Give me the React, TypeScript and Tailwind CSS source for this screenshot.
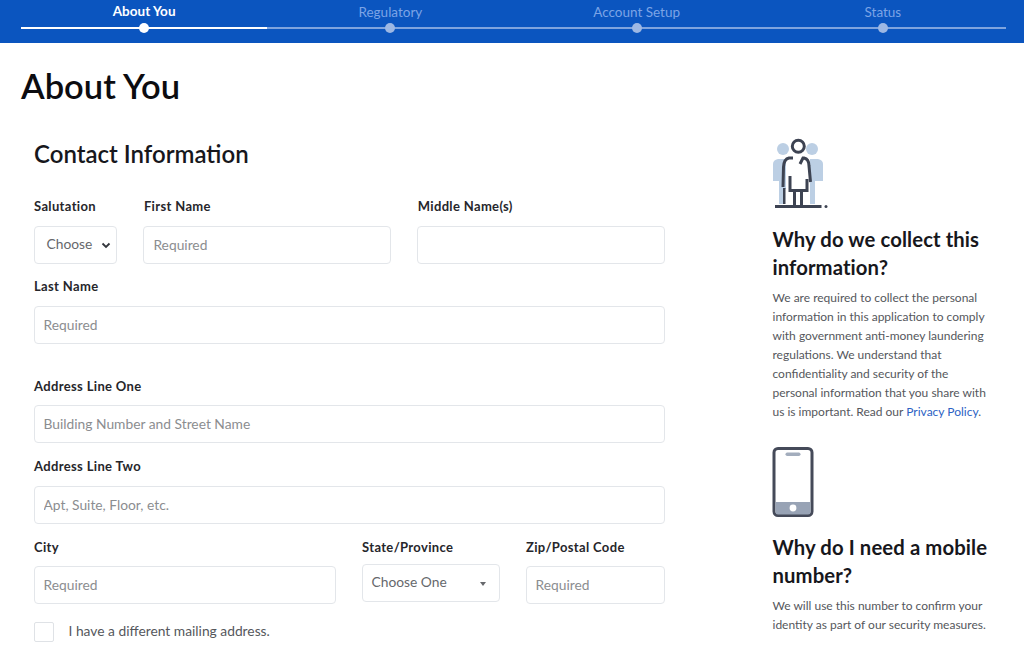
import React from "react";

function Label({ children }: { children: React.ReactNode }) {
  return <div className="ml-[0.5px] h-[20px] text-[13px] leading-[20px] font-bold text-[#26262b] tracking-[0.35px] whitespace-nowrap">{children}</div>;
}

function Field({ label, placeholder, className, tight }: { label: string; placeholder?: string; className?: string; tight?: boolean }) {
  return (
    <div className={className}>
      <Label>{label}</Label>
      <input
        readOnly
        placeholder={placeholder}
        className={`${tight ? "mt-[9px]" : "mt-[10px]"} block w-full h-[38px] rounded-[4px] border border-[#e3e6ea] bg-white px-[9px] pb-[2px] text-[13.8px] placeholder:text-[#8b8d90] outline-none`}
      />
    </div>
  );
}

function Step({ label, active }: { label: string; active?: boolean }) {
  return (
    <div className="relative flex-1 h-full flex flex-col items-center">
      <div className={`h-[17px] text-[13.5px] leading-[17px] ${active ? "mt-[3px] font-bold text-white" : "mt-[4px] text-[#7ca4e6]"}`}>{label}</div>
      <div className={`absolute left-0 right-0 top-[27px] h-[2px] ${active ? "bg-white" : "bg-[#7fa4de]"}`} />
      <div className={`absolute top-[23px] w-[10px] h-[10px] rounded-full ${active ? "bg-white" : "bg-[#9db8e4]"}`} />
    </div>
  );
}

function PeopleIcon() {
  return (
    <svg width="58" height="72" viewBox="22 8 58 72" className="block">
      <g fill="#bccfe4">
        <circle cx="33" cy="20" r="6" />
        <circle cx="62" cy="20" r="6" />
        <path d="M23 35q0-4 5-5h8v30h-2v15h-5V52h-6z" />
        <path d="M73 35q0-4-5-5h-8v25h0v20h5V52h8z" />
      </g>
      <g fill="none" stroke="#3d4352" strokeWidth="3">
        <circle cx="48.3" cy="17.3" r="6" />
        <path d="M43 29h-4q-5 1-5.500 9L33 58" />
        <path d="M50 35l3-6h1q5 1 5 8l1.500 16" />
        <path d="M40 47v14.500h17V50" />
        <path d="M44.500 61.500V76M51.500 61.500V76" />
      </g>
      <path d="M33 59h2.500v16H33z" fill="#3d4352" />
      <path d="M25 77.500h46.500" stroke="#3d4352" strokeWidth="3" />
      <circle cx="76" cy="77.500" r="1.500" fill="#3d4352" />
    </svg>
  );
}

function PhoneIcon() {
  return (
    <svg width="42" height="70" viewBox="0 0 42 70" className="block">
      <rect x="2" y="1.500" width="38" height="67" rx="4" fill="#fff" stroke="#454a59" strokeWidth="3" />
      <path d="M3.500 55h35v10a2.500 2.500 0 0 1-2.500 2.500H6a2.500 2.500 0 0 1-2.500-2.500z" fill="#98a3b5" />
      <rect x="13.500" y="5.500" width="15" height="3.500" rx="1.700" fill="#a3adbd" />
      <circle cx="21" cy="61" r="3.400" fill="#fff" />
    </svg>
  );
}

function H2({ children }: { children: React.ReactNode }) {
  return <h2 className="text-[20.3px] leading-[28px] font-bold text-[#17171c] tracking-[0.1px] whitespace-nowrap">{children}</h2>;
}

export default function App() {
  return (
    <div className="w-[1024px] h-[650px] overflow-hidden bg-white font-['Lato','Liberation_Sans',sans-serif]">
      <header className="h-[43px] bg-[#0b55bf] pl-[21px] pr-[18px] flex">
        <Step label="About You" active />
        <Step label="Regulatory" />
        <Step label="Account Setup" />
        <Step label="Status" />
      </header>

      <main className="px-[21px]">
        <h1 className="mt-[23px] h-[40px] text-[34.5px] leading-[40px] font-semibold text-[#0c0c10]">About You</h1>

        <div className="flex mt-[32px] pl-[12.5px]">
          <section className="w-[631.5px]">
            <h2 className="ml-[0.5px] mt-[1px] h-[30px] text-[24px] leading-[30px] font-semibold text-[#17171c]">Contact Information</h2>

            <div className="flex gap-[26px] mt-[27px]">
              <div className="w-[84px]">
                <Label>Salutation</Label>
                <div className="mt-[10px] h-[38px] rounded-[4px] border border-[#e3e6ea] pl-[12px] pr-[5px] pb-[2px] flex items-center justify-between text-[13.8px] text-[#66686c]">
                  Choose
                  <svg width="10" height="7" viewBox="0 0 10 7" className="mt-[2px]"><path d="M1.500 1.500L5 5l3.500-3.500" fill="none" stroke="#33363c" strokeWidth="1.800" /></svg>
                </div>
              </div>
              <Field label="First Name" placeholder="Required" className="w-[248px]" />
              <Field label="Middle Name(s)" className="w-[248px]" />
            </div>

            <Field label="Last Name" placeholder="Required" className="mt-[12px]" />
            <Field label="Address Line One" placeholder="Building Number and Street Name" className="mt-[32px]" tight />
            <Field label="Address Line Two" placeholder="Apt, Suite, Floor, etc." className="mt-[13px]" />

            <div className="flex gap-[26px] mt-[13px]">
              <Field label="City" placeholder="Required" className="w-[302px]" tight />
              <div className="w-[138px]">
                <Label>State/Province</Label>
                <div className="mt-[7px] h-[38px] rounded-[4px] border border-[#e3e6ea] pl-[9px] pr-[13px] pb-[1px] flex items-center justify-between text-[13.8px] text-[#66686c]">
                  Choose One
                  <svg width="6" height="4" viewBox="0 0 6 4" className="mt-[2px]"><path d="M0 0h6L3 4z" fill="#66686c" /></svg>
                </div>
              </div>
              <Field label="Zip/Postal Code" placeholder="Required" className="w-[139px]" tight />
            </div>

            <div className="flex items-center mt-[17px]">
              <div className="w-[20px] h-[20px] border border-[#dfe2e6] rounded-[2px]" />
              <span className="ml-[15px] pb-[2px] text-[13.8px] text-[#55575c]">I have a different mailing address.</span>
            </div>
          </section>

          <aside className="ml-[107px] w-[225px] -mt-[1px]">
            <PeopleIcon />
            <div className="mt-[16px] ml-[0.5px]">
              <H2>Why do we collect this<br />information?</H2>
            </div>
            <p className="mt-[7px] ml-[0.5px] text-[12px] leading-[19px] text-[#55575c] whitespace-nowrap">
              We are required to collect the personal<br />
              information in this application to comply<br />
              with government anti-money laundering<br />
              regulations. We understand that<br />
              confidentiality and security of the<br />
              personal information that you share with<br />
              us is important. Read our <span className="text-[#2c62c4]">Privacy Policy</span>.
            </p>
            <div className="mt-[26px]"><PhoneIcon /></div>
            <div className="mt-[16px] ml-[0.5px]">
              <H2>Why do I need a mobile<br />number?</H2>
            </div>
            <p className="mt-[7px] ml-[0.5px] text-[12px] leading-[19px] text-[#55575c] whitespace-nowrap">
              We will use this number to confirm your<br />
              identity as part of our security measures.
            </p>
          </aside>
        </div>
      </main>
    </div>
  );
}
